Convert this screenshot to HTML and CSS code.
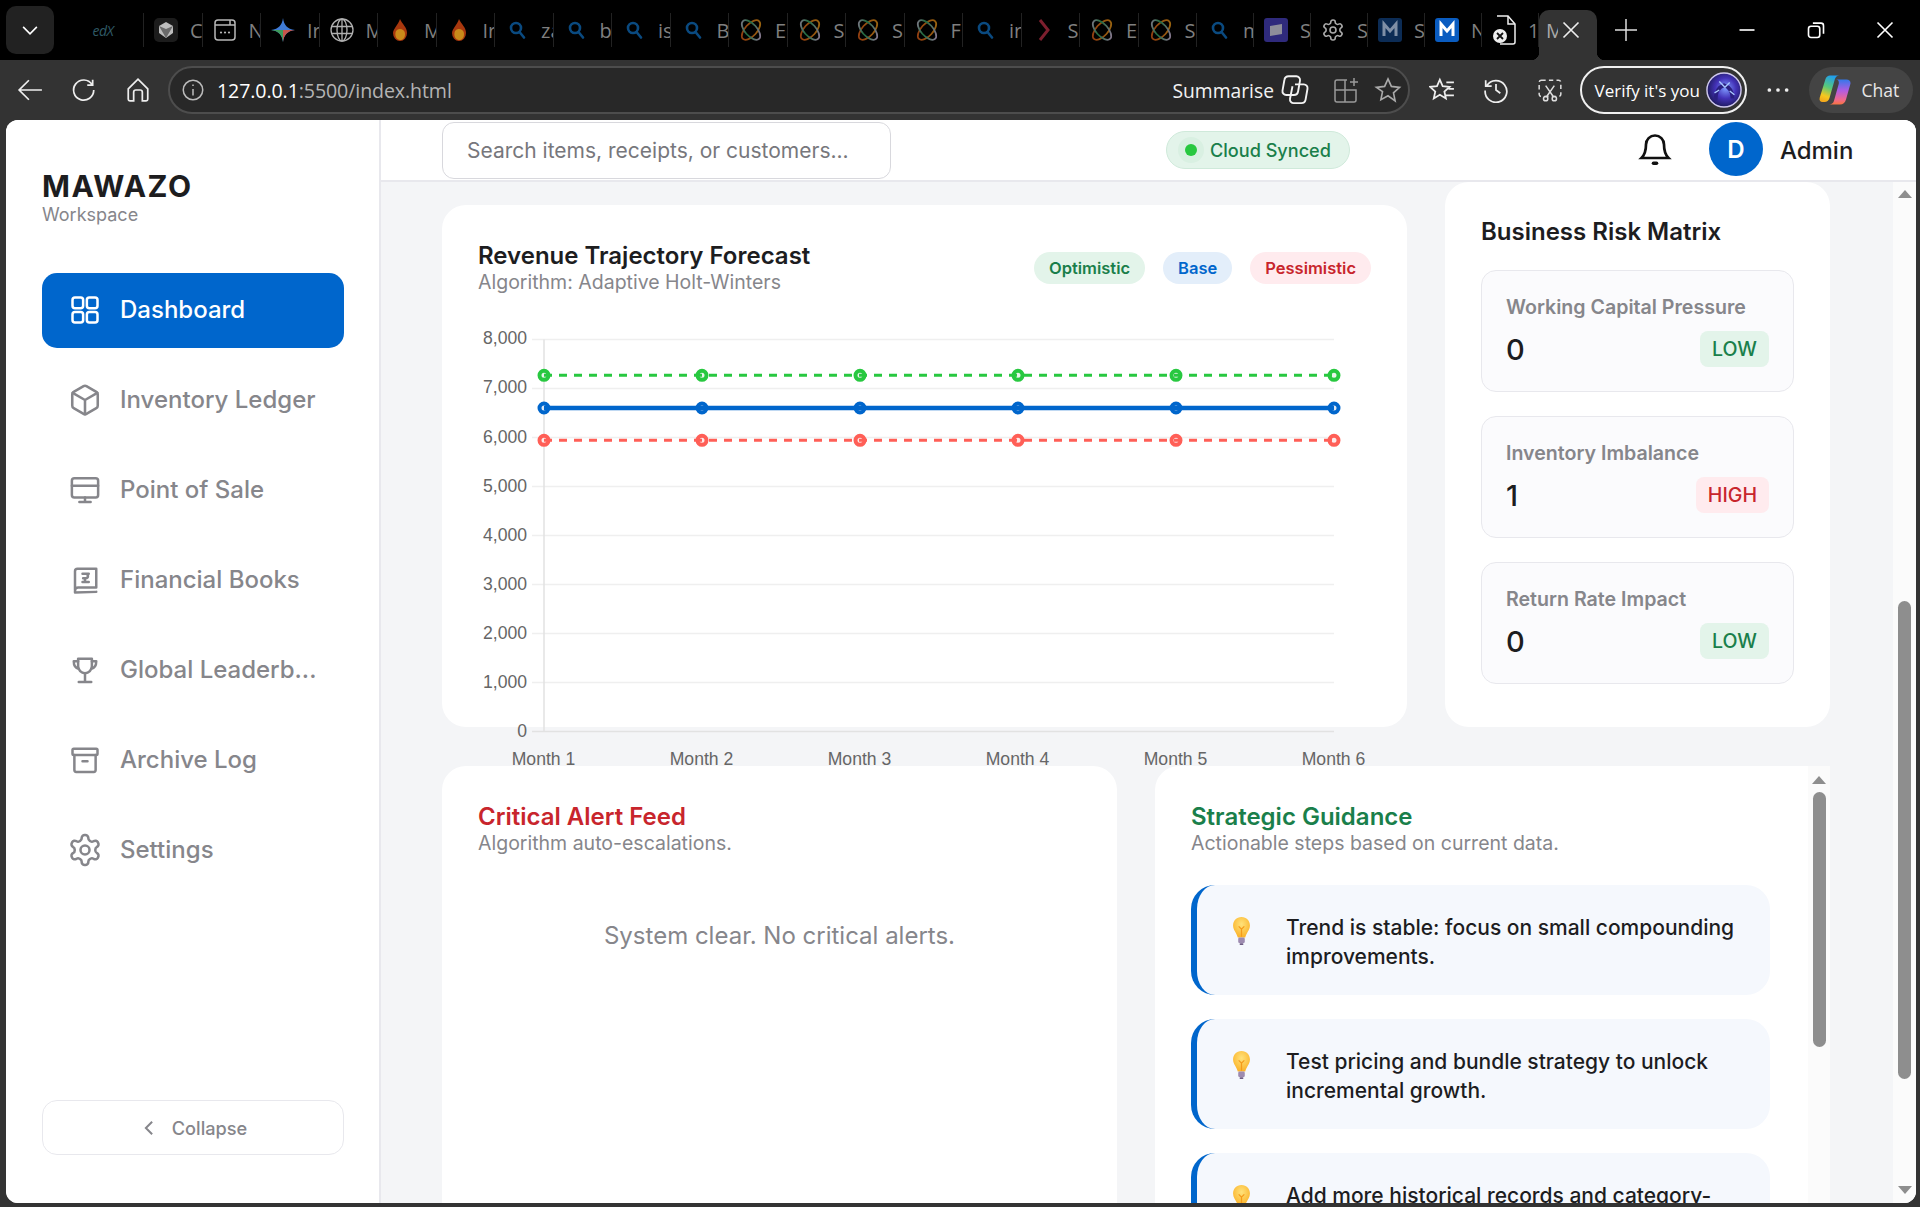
FILE: index.html
```html
<!DOCTYPE html>
<html lang="en">
<head>
<meta charset="utf-8">
<title>MAWAZO Workspace</title>
<link rel="stylesheet" href="styles.css">
</head>
<body>
<svg class="defs" width="0" height="0" aria-hidden="true">
  <defs>
    <linearGradient id="knot-a" gradientUnits="userSpaceOnUse" x1="2" y1="2" x2="18" y2="24"><stop offset="0" stop-color="#96799a"/><stop offset=".4" stop-color="#1e6a3c"/><stop offset="1" stop-color="#96799a"/></linearGradient>
    <linearGradient id="knot-b" gradientUnits="userSpaceOnUse" x1="24" y1="2" x2="2" y2="24"><stop offset="0" stop-color="#9a6c10"/><stop offset="1" stop-color="#8f3410"/></linearGradient>
  </defs>
  <symbol id="i-search" viewBox="0 0 24 24"><circle cx="11" cy="10" r="5" fill="none" stroke="#0a4a80" stroke-width="2.600"/><path d="M14.500 14l4.500 5.500" stroke="#0a4a80" stroke-width="2.600" stroke-linecap="round"/></symbol>
  <symbol id="i-knot" viewBox="0 0 24 24"><ellipse cx="12" cy="12" rx="6" ry="12" transform="rotate(42 12 12)" fill="none" stroke="url(#knot-b)" stroke-width="1.800"/><ellipse cx="12" cy="12" rx="6" ry="12" transform="rotate(-42 12 12)" fill="none" stroke="url(#knot-a)" stroke-width="1.800"/></symbol>
  <symbol id="i-flame" viewBox="0 0 24 24"><path d="M12 1c2 5 7 8 7 14a7 8 0 0 1-14 0c0-4 5-8 7-14z" fill="#a8380e"/><path d="M8 13a5 5 0 0 1 9 3c0 4-2 6-5 6s-6-4-4-9z" fill="#c98a1a"/></symbol>
  <symbol id="i-gear" viewBox="0 0 24 24"><path d="M12.220 2h-.44a2 2 0 0 0-2 2v.18a2 2 0 0 1-1 1.730l-.43.25a2 2 0 0 1-2 0l-.15-.08a2 2 0 0 0-2.730.73l-.22.38a2 2 0 0 0 .73 2.730l.15.1a2 2 0 0 1 1 1.720v.51a2 2 0 0 1-1 1.740l-.15.09a2 2 0 0 0-.73 2.730l.22.38a2 2 0 0 0 2.730.73l.15-.08a2 2 0 0 1 2 0l.43.25a2 2 0 0 1 1 1.730V20a2 2 0 0 0 2 2h.44a2 2 0 0 0 2-2v-.18a2 2 0 0 1 1-1.730l.43-.25a2 2 0 0 1 2 0l.15.08a2 2 0 0 0 2.730-.73l.22-.39a2 2 0 0 0-.73-2.730l-.15-.08a2 2 0 0 1-1-1.740v-.5a2 2 0 0 1 1-1.740l.15-.09a2 2 0 0 0 .73-2.730l-.22-.38a2 2 0 0 0-2.730-.73l-.15.08a2 2 0 0 1-2 0l-.43-.25a2 2 0 0 1-1-1.730V4a2 2 0 0 0-2-2z"/><circle cx="12" cy="12" r="3"/></symbol>
  <symbol id="i-bulb" viewBox="0 0 20 32"><defs><radialGradient id="bulb-fill" cx="50%" cy="35%" r="65%"><stop offset="0" stop-color="#ffe27a"/><stop offset="1" stop-color="#fbb228"/></radialGradient></defs><path d="M10 1C4.500 1 1 5 1 10c0 5 4 8 5 13h8c1-5 5-8 5-13 0-5-3.500-9-9-9z" fill="url(#bulb-fill)"/><path d="M7 11l3 3 3-3M10 14v8" fill="none" stroke="#f59a1a" stroke-width="1.300"/><rect x="6.500" y="23" width="7" height="6" rx="1.500" fill="#9d8bb0"/><rect x="8" y="29" width="4" height="2" rx="1" fill="#6f5e85"/></symbol>
</svg>

<header class="tabstrip">
  <button class="tab-menu" type="button" aria-label="Tab actions"><svg class="ic-16" viewBox="0 0 16 16"><path d="M2.500 5.500L8 11l5.500-5.500" fill="none" stroke="#fff" stroke-width="1.300"/></svg></button>
  <div class="tabs">
    <div class="tab tab-first"><span class="edx">edX</span></div>
    <div class="tab"><svg class="fav" viewBox="0 0 24 24"><rect width="24" height="24" rx="5" fill="#1c1c1c"/><path d="M12 4l7 4v7l-7 5-7-5V8z" fill="#bdbdbd"/><path d="M5 8l7 3 7-3-7 12z" fill="#6a6a6a"/></svg><span>C</span></div>
    <div class="tab"><svg class="fav" viewBox="0 0 24 24" fill="none" stroke="#b8b8b8" stroke-width="1.500"><rect x="2" y="2" width="20" height="20" rx="3"/><path d="M2 7h20M17 2v5"/><path d="M8 14.500h.01M12 14.500h.01M16 14.500h.01" stroke-width="2.200" stroke-linecap="round"/></svg><span>N</span></div>
    <div class="tab"><svg class="fav" viewBox="0 0 24 24"><path d="M12 0c1 7 4 11 12 12-8 1-11 5-12 12-1-7-4-11-12-12 8-1 11-5 12-12z" fill="#3f7bd6"/><path d="M12 12h12c-8 1-11 5-12 12z" fill="#c8554a"/><path d="M12 12v12c-1-7-4-11-12-12z" fill="#3d9a5a"/></svg><span>Ir</span></div>
    <div class="tab"><svg class="fav" viewBox="0 0 24 24" fill="none" stroke="#b0b0b0" stroke-width="1.300"><circle cx="12" cy="12" r="11"/><ellipse cx="12" cy="12" rx="5" ry="11"/><path d="M1.500 8.500h21M1.500 15.500h21M12 1v22"/></svg><span>M</span></div>
    <div class="tab"><svg class="fav"><use href="#i-flame"/></svg><span>M</span></div>
    <div class="tab"><svg class="fav"><use href="#i-flame"/></svg><span>Ir</span></div>
    <div class="tab"><svg class="fav"><use href="#i-search"/></svg><span>za</span></div>
    <div class="tab"><svg class="fav"><use href="#i-search"/></svg><span>b</span></div>
    <div class="tab"><svg class="fav"><use href="#i-search"/></svg><span>is</span></div>
    <div class="tab"><svg class="fav"><use href="#i-search"/></svg><span>B</span></div>
    <div class="tab"><svg class="fav"><use href="#i-knot"/></svg><span>E</span></div>
    <div class="tab"><svg class="fav"><use href="#i-knot"/></svg><span>S</span></div>
    <div class="tab"><svg class="fav"><use href="#i-knot"/></svg><span>S</span></div>
    <div class="tab"><svg class="fav"><use href="#i-knot"/></svg><span>F</span></div>
    <div class="tab"><svg class="fav"><use href="#i-search"/></svg><span>ir</span></div>
    <div class="tab"><svg class="fav" viewBox="0 0 24 24"><path d="M8 2l8 10-8 10" fill="none" stroke="#7d1f2e" stroke-width="3"/></svg><span>S</span></div>
    <div class="tab"><svg class="fav"><use href="#i-knot"/></svg><span>E</span></div>
    <div class="tab"><svg class="fav"><use href="#i-knot"/></svg><span>S</span></div>
    <div class="tab tab-narrow"><svg class="fav"><use href="#i-search"/></svg><span>m</span></div>
    <div class="tab tab-narrow"><svg class="fav" viewBox="0 0 24 24"><rect width="24" height="24" rx="3" fill="#2f2a7c"/><path d="M6 8l12-2v10l-12 2z" fill="#8e8e9a"/></svg><span>S</span></div>
    <div class="tab tab-narrow"><svg class="fav gear-fav"><use href="#i-gear"/></svg><span>S</span></div>
    <div class="tab tab-narrow"><svg class="fav" viewBox="0 0 24 24"><rect width="24" height="24" rx="3" fill="#0c2c55"/><path d="M6 18V6l6 7 6-7v12" fill="none" stroke="#7f8fa6" stroke-width="3"/></svg><span>S</span></div>
    <div class="tab tab-narrow"><svg class="fav" viewBox="0 0 24 24"><rect width="24" height="24" rx="3" fill="#0a5cc0"/><path d="M6 18V6l6 7 6-7v12" fill="none" stroke="#fff" stroke-width="3"/></svg><span>N</span></div>
    <div class="tab tab-narrow"><svg class="fav fav-doc" viewBox="0 0 24 30" fill="none" stroke="#eee" stroke-width="1.500"><path d="M5 1h11l7 8v18a2 2 0 0 1-2 2H8"/><path d="M16 1v8h7"/><circle cx="8" cy="21" r="7" fill="#eee" stroke="none"/><path d="M5 18l6 6M11 18l-6 6" stroke="#111" stroke-width="1.800"/></svg><span>1</span></div>
  </div>
  <div class="tab-active"><span class="tab-active-title">M</span><svg class="ic-16" viewBox="0 0 16 16"><path d="M2 2l12 12M14 2L2 14" stroke="#eee" stroke-width="1.300"/></svg></div>
  <svg class="new-tab" viewBox="0 0 24 24"><path d="M12 1v22M1 12h22" stroke="#ddd" stroke-width="1.500"/></svg>
  <div class="winctl">
    <svg class="ic-16" viewBox="0 0 16 16"><path d="M2 8h12" stroke="#fff" stroke-width="1.300"/></svg>
    <svg class="ic-16" viewBox="0 0 16 16" fill="none" stroke="#fff" stroke-width="1.300"><rect x="2" y="5" width="9" height="9" rx="2"/><path d="M5.500 2.500H12a2 2 0 0 1 2 2V11"/></svg>
    <svg class="ic-16" viewBox="0 0 16 16"><path d="M2 2l12 12M14 2L2 14" stroke="#fff" stroke-width="1.300"/></svg>
  </div>
</header>

<nav class="toolbar">
  <span class="tool"><svg class="ic-26" viewBox="0 0 24 24" fill="none" stroke="#eee" stroke-width="1.600"><path d="M23 12H2M11 3l-9 9 9 9"/></svg></span>
  <span class="tool"><svg class="ic-26" viewBox="0 0 24 24" fill="none" stroke="#eee" stroke-width="1.600"><path d="M19.500 7A9.300 9.300 0 1 0 21 12M20 2.500V7.500h-5"/></svg></span>
  <span class="tool"><svg class="ic-26" viewBox="0 0 24 24" fill="none" stroke="#eee" stroke-width="1.600"><path d="M3 11l9-9 9 9v9.500a1.500 1.500 0 0 1-1.500 1.500H16v-8a2 2 0 0 0-2-2h-4a2 2 0 0 0-2 2v8H4.500A1.500 1.500 0 0 1 3 20.500z"/></svg></span>
  <div class="addressbar">
    <svg class="ic-24" viewBox="0 0 24 24" fill="none" stroke="#bbb" stroke-width="1.400"><circle cx="12" cy="12" r="9"/><path d="M12 11v6M12 7v1.400"/></svg>
    <span class="url"><b>127.0.0.1</b>:5500/index.html</span>
    <span class="summarise">Summarise</span>
    <svg class="ic-30" viewBox="3 2 24 24" fill="none" stroke="#f2f2f2" stroke-width="1.500"><path d="M10 3h6a3 3 0 0 1 3 3.500L17.500 15a3.500 3.500 0 0 1-3.500 3H8a3 3 0 0 1-3-3.500L6.500 6A3.500 3.500 0 0 1 10 3z"/><path d="M15 9.500h7a3 3 0 0 1 3 3.500l-1.500 8.500a3.500 3.500 0 0 1-3.500 3h-6a3 3 0 0 1-3-3.500L13 11"/></svg>
    <svg class="ic-28 add-split" viewBox="0 0 28 28" fill="none" stroke="#999" stroke-width="1.500"><path d="M15 4H5a2 2 0 0 0-2 2v18a2 2 0 0 0 2 2h17a2 2 0 0 0 2-2V14H3M13 4v22M22 2v8M18 6h8"/></svg>
    <svg class="ic-28 star" viewBox="0 0 24 24" fill="none" stroke="#aaa" stroke-width="1.400"><path d="M12 2.500l2.900 6.400 7 .8-5.200 4.700 1.400 6.900L12 17l-6.100 3.300 1.400-6.900L2.100 9.700l7-.8z"/></svg>
  </div>
  <span class="tool tool-first"><svg class="ic-26" viewBox="0 0 24 24" fill="none" stroke="#eee" stroke-width="1.600"><path d="M10 2.500l2.600 6 6.400.6-4.800 4.300 1.400 6.400L10 16.500l-5.600 3.300 1.400-6.400L1 9.100l6.400-.6zM16 5h7M18 11h5M15 17h8"/></svg></span>
  <span class="tool"><svg class="ic-26" viewBox="0 0 24 24" fill="none" stroke="#eee" stroke-width="1.600"><path d="M3.500 8A10 10 0 1 1 2 12.500M2.500 3v5.500H8M12 6.500V12l4 3"/></svg></span>
  <span class="tool"><svg class="ic-26" viewBox="0 0 24 24" fill="none" stroke="#ddd" stroke-width="1.400"><rect x="2" y="3" width="20" height="15" rx="2" stroke-dasharray="4 3"/><path d="M8 8l7 10M16 8L9 18"/><circle cx="8" cy="20" r="2"/><circle cx="16" cy="20" r="2"/></svg></span>
  <div class="verify"><span>Verify it's you</span><svg class="avatar-img" viewBox="0 0 38 38"><defs><radialGradient id="av" cx="55%" cy="45%" r="60%"><stop offset="0" stop-color="#7f9cff"/><stop offset=".5" stop-color="#4332b8"/><stop offset="1" stop-color="#181650"/></radialGradient></defs><circle cx="19" cy="19" r="18" fill="url(#av)" stroke="#cfc8ee" stroke-width="1.500"/><path d="M10 30c0-9 3-14 9-16 6 2 9 7 9 14" fill="none" stroke="#2a1f80" stroke-width="4"/><path d="M14 10l6 6 5-5M9 22l5-3M25 20l5 4" fill="none" stroke="#a9c8ff" stroke-width="1.500"/></svg></div>
  <span class="tool tool-dots"><svg class="ic-26" viewBox="0 0 24 24" fill="#eee"><circle cx="4" cy="12" r="1.700"/><circle cx="12" cy="12" r="1.700"/><circle cx="20" cy="12" r="1.700"/></svg></span>
  <div class="chat"><svg class="copilot" viewBox="0 0 32 32"><defs><linearGradient id="cp1" x1=".6" y1="0" x2=".3" y2="1"><stop offset="0" stop-color="#1f9df0"/><stop offset=".45" stop-color="#58c97a"/><stop offset=".8" stop-color="#f7c71e"/><stop offset="1" stop-color="#f4a81c"/></linearGradient><linearGradient id="cp2" x1=".5" y1="0" x2=".5" y2="1"><stop offset="0" stop-color="#3478ea"/><stop offset=".45" stop-color="#b25ce2"/><stop offset=".8" stop-color="#f0688f"/><stop offset="1" stop-color="#f8743f"/></linearGradient></defs><path d="M11 1.500h9.500c-2.500 0-4 1.500-4.600 3.600L10.500 24c-.8 2.600-2.500 4-5 4H3.500C1.200 28 0 26 .7 23.700L6.500 5C7.200 2.800 9 1.500 11 1.500z" fill="url(#cp1)"/><path d="M17 5.500h10.500c3 0 4.600 2 3.800 4.800L27 25.500c-1 3.300-3 5-6 5H10c2.500 0 4.300-1.300 5-3.800L19.700 10c.6-2.600-.5-4.500-2.700-4.500z" fill="url(#cp2)"/></svg><span>Chat</span></div>
</nav>

<div class="viewport">
  <aside class="sidebar">
    <div class="brand">
      <div class="brand-name">MAWAZO</div>
      <div class="brand-sub">Workspace</div>
    </div>
    <ul class="nav">
      <li class="nav-item is-active"><svg class="nav-ic" viewBox="0 0 24 24"><rect x="2" y="2" width="8.500" height="8.500" rx="2"/><rect x="13.500" y="2" width="8.500" height="8.500" rx="2"/><rect x="2" y="13.500" width="8.500" height="8.500" rx="2"/><rect x="13.500" y="13.500" width="8.500" height="8.500" rx="2"/></svg><span>Dashboard</span></li>
      <li class="nav-item"><svg class="nav-ic nav-wide" viewBox="0 0 24 24"><path d="M21 8a2 2 0 0 0-1-1.730l-7-4a2 2 0 0 0-2 0l-7 4A2 2 0 0 0 3 8v8a2 2 0 0 0 1 1.730l7 4a2 2 0 0 0 2 0l7-4A2 2 0 0 0 21 16z"/><path d="M3.300 7L12 12l8.700-5M12 22V12"/></svg><span>Inventory Ledger</span></li>
      <li class="nav-item"><svg class="nav-ic" viewBox="0 0 24 24"><rect x="1.500" y="2.500" width="21" height="15.500" rx="2"/><path d="M1.500 8.500h21M12 18v3.500M7.500 21.500h9"/></svg><span>Point of Sale</span></li>
      <li class="nav-item"><svg class="nav-ic" viewBox="0 0 24 24"><path d="M4 20V5a2 2 0 0 1 2-2h15v15H6.500A2.500 2.500 0 0 0 4 20.500V22l17-.5"/><path d="M10 7h5M12.500 7c2.500 0 2.500 3.500 0 3.500h-2M10 13.500h5M12 10.500v3"/></svg><span>Financial Books</span></li>
      <li class="nav-item"><svg class="nav-ic" viewBox="0 0 24 24"><path d="M6.500 3h11v6a5.500 5.500 0 0 1-11 0z"/><path d="M6.500 5H3c0 3.500 1.500 5.500 4 6M17.500 5H21c0 3.500-1.500 5.500-4 6M12 14.500V21M7 21.500h10"/></svg><span>Global Leaderb...</span></li>
      <li class="nav-item"><svg class="nav-ic" viewBox="0 0 24 24"><rect x="2" y="3" width="20" height="5" rx="1"/><path d="M3.500 8v12a1.500 1.500 0 0 0 1.500 1.500h14a1.500 1.500 0 0 0 1.500-1.500V8M10 13h4"/></svg><span>Archive Log</span></li>
      <li class="nav-item"><svg class="nav-ic nav-gear"><use href="#i-gear"/></svg><span>Settings</span></li>
    </ul>
    <button class="collapse" type="button"><svg class="collapse-ic" viewBox="0 0 16 16"><path d="M10.500 3L5.500 8l5 5" fill="none" stroke="#86868b" stroke-width="1.600"/></svg><span>Collapse</span></button>
  </aside>

  <div class="page">
    <div class="topbar">
      <div class="search">Search items, receipts, or customers...</div>
      <div class="sync"><i class="sync-dot"></i><span>Cloud Synced</span></div>
      <svg class="bell" viewBox="0 0 24 24" fill="none" stroke="#111" stroke-width="1.800"><path d="M6 9a6 6 0 0 1 12 0c0 6 2 8 3 9H3c1-1 3-3 3-9z"/><path d="M11 21.500h2" stroke-linecap="round" stroke-width="2.400"/></svg>
      <div class="avatar">D</div>
      <div class="admin">Admin</div>
    </div>

    <div class="body-wrap">
      <main class="content">
        <div class="row-top">
          <section class="card card-forecast">
            <div class="card-head">
              <div>
                <h2 class="card-title">Revenue Trajectory Forecast</h2>
                <p class="card-sub">Algorithm: Adaptive Holt-Winters</p>
              </div>
              <div class="legend">
                <span class="pill pill-green">Optimistic</span>
                <span class="pill pill-blue">Base</span>
                <span class="pill pill-red">Pessimistic</span>
              </div>
            </div>
            <svg class="chart" viewBox="0 0 890 445" width="890" height="445">
              <g class="grid">
                <path d="M54 13.500H856M54 62.500H856M54 111.500H856M54 160.500H856M54 209.500H856M54 258.500H856M54 307.500H856M54 356.500H856"/>
                <path class="axis" d="M66 13.500V406M54 405.500H856"/>
              </g>
              <g class="ylabels">
                <text x="49" y="18">8,000</text><text x="49" y="67">7,000</text><text x="49" y="117">6,000</text><text x="49" y="166">5,000</text><text x="49" y="215">4,000</text><text x="49" y="264">3,000</text><text x="49" y="313">2,000</text><text x="49" y="362">1,000</text><text x="49" y="411">0</text>
              </g>
              <g class="xlabels">
                <text x="65.500" y="439">Month 1</text><text x="223.500" y="439">Month 2</text><text x="381.500" y="439">Month 3</text><text x="539.500" y="439">Month 4</text><text x="697.500" y="439">Month 5</text><text x="855.500" y="439">Month 6</text>
              </g>
              <g class="pts-green"><circle cx="66" cy="49.300" r="4.500"/><circle cx="224" cy="49.300" r="4.500"/><circle cx="382" cy="49.300" r="4.500"/><circle cx="540" cy="49.300" r="4.500"/><circle cx="698" cy="49.300" r="4.500"/><circle cx="856" cy="49.300" r="4.500"/></g>
              <g class="pts-red"><circle cx="66" cy="114.300" r="4.500"/><circle cx="224" cy="114.300" r="4.500"/><circle cx="382" cy="114.300" r="4.500"/><circle cx="540" cy="114.300" r="4.500"/><circle cx="698" cy="114.300" r="4.500"/><circle cx="856" cy="114.300" r="4.500"/></g>
              <g class="pts-blue"><circle cx="66" cy="82" r="4.500"/><circle cx="224" cy="82" r="4.500"/><circle cx="382" cy="82" r="4.500"/><circle cx="540" cy="82" r="4.500"/><circle cx="698" cy="82" r="4.500"/><circle cx="856" cy="82" r="4.500"/></g>
              <path class="line-green" d="M66 49.300H856"/>
              <path class="line-red" d="M66 114.300H856"/>
              <path class="line-blue" d="M66 82H856"/>
            </svg>
          </section>

          <section class="card card-risk">
            <h2 class="card-title">Business Risk Matrix</h2>
            <div class="risk-list">
              <div class="risk"><div class="risk-label">Working Capital Pressure</div><div class="risk-row"><span class="risk-val">0</span><span class="tag tag-low">LOW</span></div></div>
              <div class="risk"><div class="risk-label">Inventory Imbalance</div><div class="risk-row"><span class="risk-val">1</span><span class="tag tag-high">HIGH</span></div></div>
              <div class="risk"><div class="risk-label">Return Rate Impact</div><div class="risk-row"><span class="risk-val">0</span><span class="tag tag-low">LOW</span></div></div>
            </div>
          </section>
        </div>

        <div class="row-bottom">
          <section class="card card-alerts">
            <h2 class="card-title title-red">Critical Alert Feed</h2>
            <p class="card-sub">Algorithm auto-escalations.</p>
            <p class="empty">System clear. No critical alerts.</p>
          </section>
          <section class="card card-guidance">
            <div class="guidance-body">
              <h2 class="card-title title-green">Strategic Guidance</h2>
              <p class="card-sub">Actionable steps based on current data.</p>
              <div class="advice"><svg class="bulb"><use href="#i-bulb"/></svg><p>Trend is stable: focus on small compounding improvements.</p></div>
              <div class="advice"><svg class="bulb"><use href="#i-bulb"/></svg><p>Test pricing and bundle strategy to unlock incremental growth.</p></div>
              <div class="advice"><svg class="bulb"><use href="#i-bulb"/></svg><p>Add more historical records and category-level tagging for sharper forecasts.</p></div>
            </div>
            <div class="scrollbar scrollbar-inner"><i class="arrow-up"></i><i class="thumb"></i><i class="arrow-down"></i></div>
          </section>
        </div>
      </main>
      <div class="scrollbar scrollbar-page"><i class="arrow-up"></i><i class="thumb"></i><i class="arrow-down"></i></div>
    </div>
  </div>
</div>
</body>
</html>
```

FILE: styles.css
```css
* { box-sizing: border-box; }
html, body { margin: 0; height: 100%; }
body {
  width: 1920px; height: 1207px; overflow: hidden;
  background: #333; color: #1d1d1f;
  font-family: Inter, "Noto Sans", sans-serif;
  display: flex; flex-direction: column;
}
.defs { position: absolute; }
h2, p, ul { margin: 0; padding: 0; }
i { display: block; }

/* browser tab strip */
.tabstrip { height: 60px; flex: none; background: #000; display: flex; align-items: center; font-family: "Open Sans", sans-serif; position: relative; }
.tab-menu { width: 48px; height: 48px; margin-left: 6px; border: 0; border-radius: 10px; background: #222; display: flex; align-items: center; justify-content: center; padding: 0; }
.ic-16 { width: 20px; height: 20px; flex: none; }
.tabs { display: flex; margin-left: 31.500px; flex: none; }
.tab { width: 58.500px; height: 34px; flex: none; display: flex; align-items: center; overflow: hidden; padding-left: 10px; gap: 12px; border-right: 1px solid #222; color: #7f7f7f; font-size: 20px; white-space: nowrap; }
.tab-narrow { width: 57px; }
.tab-first { padding-left: 7px; }
.edx { font-size: 14px; font-style: italic; color: #2f5a66; letter-spacing: -.5px; }
.fav { width: 24px; height: 24px; flex: none; }
.fav-doc { height: 30px; }
.gear-fav { fill: none; stroke: #aaa; stroke-width: 1.600; }
.tab-active { width: 58px; height: 50px; margin-top: 10px; flex: none; background: #333; border-radius: 10px 10px 0 0; display: flex; align-items: center; padding: 0 0 10px 7px; gap: 3px; color: #aaa; font-size: 20px; position: relative; }
.tab-active::before, .tab-active::after { content: ""; position: absolute; bottom: 0; width: 8px; height: 8px; background: radial-gradient(circle at 0 0, #000 8px, #333 8.500px); }
.tab-active::before { left: -8px; }
.tab-active::after { right: -8px; background: radial-gradient(circle at 100% 0, #000 8px, #333 8.500px); }
.tab-active-title { width: 12px; overflow: hidden; }
.new-tab { width: 24px; height: 24px; margin-left: 16.500px; flex: none; }
.winctl { display: flex; margin-left: auto; margin-right: 25px; gap: 49px; }

/* browser toolbar */
.toolbar { height: 60px; flex: none; background: #333; display: flex; align-items: center; padding-left: 8px; font-family: "Open Sans", sans-serif; color: #fff; overflow: hidden; }
.tool { width: 44px; height: 44px; flex: none; display: flex; align-items: center; justify-content: center; margin-right: 10px; }
.ic-26 { width: 26px; height: 26px; flex: none; }
.ic-24 { width: 26px; height: 26px; flex: none; }
.ic-28 { width: 28px; height: 28px; flex: none; }
.ic-30 { width: 30px; height: 30px; flex: none; }
.addressbar { width: 1242px; height: 48px; flex: none; margin-left: -2px; margin-right: 10px; background: #282828; border: 2px solid #4d4d4d; border-radius: 24px; display: flex; align-items: center; padding-left: 10px; }
.url { margin-left: 11px; font-size: 19.600px; color: #b4b4b4; letter-spacing: -.1px; }
.url b { color: #fff; font-weight: 400; }
.summarise { margin-left: auto; margin-right: 6px; font-size: 19.300px; color: #f2f2f2; }
.add-split { margin-left: 22px; }
.star { margin: 0 6px 0 14px; }
.tool-first { margin-left: 0; }
.verify { width: 167px; height: 48px; flex: none; margin-left: -2.500px; border: 2px solid #f0f0f0; border-radius: 24px; display: flex; align-items: center; justify-content: space-between; padding: 0 3px 0 13px; font-size: 17px; white-space: nowrap; }
.avatar-img { width: 36px; height: 36px; flex: none; }
.tool-dots { margin-left: 9px; margin-right: 9px; }
.chat { width: 104px; height: 46px; flex: none; background: #444; border-radius: 23px; display: flex; align-items: center; padding-left: 10px; gap: 11px; font-size: 17.500px; color: #e8e8e8; }
.copilot { width: 32px; height: 32px; flex: none; }

/* app shell */
.viewport { flex: 1; min-height: 0; margin: 0 4px 4px 6px; background: #fff; border-radius: 12px; overflow: hidden; display: flex; }
.sidebar { width: 375px; flex: none; background: #fff; border-right: 2px solid #e8e8ed; padding: 48px 35px 48px 36px; display: flex; flex-direction: column; }
.brand-name { font-size: 30px; font-weight: 700; letter-spacing: 1.500px; line-height: 36px; color: #1d1d1f; }
.brand-sub { font-size: 18px; line-height: 20px; color: #86868b; margin-top: 1px; }
.nav { list-style: none; margin-top: 48px; display: flex; flex-direction: column; gap: 15px; }
.nav-item { height: 75px; border-radius: 15px; display: flex; align-items: center; padding: 0 0 2px 28px; gap: 20px; font-size: 24px; font-weight: 500; color: #86868b; }
.nav-ic { width: 30px; height: 30px; flex: none; fill: none; stroke: currentColor; stroke-width: 2; stroke-linecap: round; stroke-linejoin: round; }
.nav-wide { width: 34px; height: 34px; margin: 0 -2px; stroke-width: 1.800; }
.nav-gear { width: 36px; height: 36px; margin: 0 -3px; stroke-width: 1.700; }
.nav-item.is-active { background: #0066cc; color: #fff; }
.collapse { margin-top: auto; height: 55px; border: 1px solid #e8e8ed; border-radius: 15px; background: #fff; display: flex; align-items: center; justify-content: center; gap: 13px; padding-left: 6px; font: 500 18.200px Inter, sans-serif; color: #86868b; }
.collapse-ic { width: 20px; height: 20px; }

.page { flex: 1; min-width: 0; display: flex; flex-direction: column; background: #f4f5f7; }
.topbar { height: 62px; flex: none; background: #fff; border-bottom: 2px solid #e8e8ed; display: flex; align-items: center; padding-left: 61px; position: relative; z-index: 2; }
.search { width: 449px; height: 57px; border: 1px solid #d8d8dd; border-radius: 12px; padding-left: 24px; display: flex; align-items: center; font-size: 21px; color: #77777c; }
.sync { height: 38px; margin-left: 275px; padding: 0 18px 0 18px; background: #e3f4ea; border: 1px solid #cfe9da; border-radius: 19px; display: flex; align-items: center; gap: 13px; font-size: 18.100px; font-weight: 500; color: #1a7f4b; }
.sync-dot { width: 12px; height: 12px; border-radius: 50%; background: #28c840; box-shadow: 0 0 0 7px #d9f0e2; }
.bell { width: 36px; height: 36px; margin-left: 287px; margin-top: -2px; flex: none; }
.avatar { width: 54px; height: 54px; margin-left: 36px; border-radius: 50%; background: #0066cc; color: #fff; display: flex; align-items: center; justify-content: center; font-size: 24px; font-weight: 600; margin-top: -2px; flex: none; }
.admin { margin-left: 17px; font-size: 24px; font-weight: 500; color: #1d1d1f; }

.body-wrap { flex: 1; min-height: 0; display: flex; }
.content { flex: 1; min-width: 0; overflow: hidden; padding-left: 61px; }
.scrollbar { flex: none; background: #fbfbfb; display: flex; flex-direction: column; align-items: center; position: relative; }
.scrollbar-page { width: 23px; }
.scrollbar-inner { width: 22px; }
.arrow-up { width: 0; height: 0; border: 7px solid transparent; border-top: 0; border-bottom: 8px solid #8e8e8e; }
.arrow-down { width: 0; height: 0; border: 7px solid transparent; border-bottom: 0; border-top: 8px solid #8e8e8e; position: absolute; bottom: 9px; }
.thumb { width: 13px; background: #8e8e8e; border-radius: 7px; }
.scrollbar-page .arrow-up { margin-top: 8px; }
.scrollbar-page .thumb { height: 478px; margin-top: 403px; }
.scrollbar-inner .arrow-up { margin-top: 10px; }
.scrollbar-inner .thumb { height: 255px; margin-top: 8px; }

.row-top { display: grid; grid-template-columns: 965px 385px; column-gap: 38px; align-items: end; }
.row-bottom { display: grid; grid-template-columns: 675px 675px; column-gap: 38px; margin-top: 39px; position: relative; }
.card { background: #fff; border-radius: 24px; }
.card-forecast { height: 522px; padding: 35px 36px 0; }
.card-head { display: flex; justify-content: space-between; align-items: flex-start; }
.card-title { font-size: 24px; font-weight: 600; line-height: 30px; color: #1d1d1f; padding-top: 1px; margin-bottom: -1px; }
.card-sub { font-size: 19.500px; line-height: 24px; color: #86868b; }
.legend { display: flex; gap: 18px; margin-top: 12px; }
.pill { height: 32px; padding: 0 15px; border-radius: 16px; display: flex; align-items: center; font-size: 16.500px; font-weight: 600; }
.pill-green { background: #e3f4ea; color: #1a7f4b; }
.pill-blue { background: #e3eefa; color: #0066cc; }
.pill-red { background: #ffebee; color: #c8252c; }
.chart { display: block; margin-top: 32px; overflow: visible; font-family: "Liberation Sans", Arial, sans-serif; font-size: 17.600px; fill: #666; }
.grid path { fill: none; stroke: #efefef; stroke-width: 1.500; }
.grid .axis { stroke: #e2e2e2; }
.ylabels text { text-anchor: end; }
.xlabels text { text-anchor: middle; }
.line-blue { fill: none; stroke: #0066cc; stroke-width: 4.500; }
.line-green { fill: none; stroke: #28c840; stroke-width: 3; stroke-dasharray: 8 7; }
.line-red { fill: none; stroke: #ff5f57; stroke-width: 3; stroke-dasharray: 8 7; }
.pts-blue circle { fill: #dde8f5; stroke: #0066cc; stroke-width: 4; }
.pts-green circle { fill: #e8f5ea; stroke: #28c840; stroke-width: 4; }
.pts-red circle { fill: #fdeaea; stroke: #ff5f57; stroke-width: 4; }

.card-risk { height: 545px; padding: 34px 36px 0 36px; }
.risk-list { display: flex; flex-direction: column; gap: 24px; margin-top: 24px; }
.risk { height: 122px; background: #fbfbfd; border: 1px solid #e8e8ed; border-radius: 15px; padding: 24px 24px 0 24px; }
.risk-label { font-size: 19.600px; font-weight: 600; line-height: 24px; color: #86868b; }
.risk-row { display: flex; justify-content: space-between; align-items: center; margin-top: 12px; }
.risk-val { font-size: 29px; font-weight: 500; color: #1d1d1f; }
.tag { height: 36px; padding: 0 12px; border-radius: 8px; display: flex; align-items: center; font-size: 19.600px; font-weight: 500; }
.tag-low { background: #e3f4ea; color: #1a7f4b; }
.tag-high { background: #ffebee; color: #c8252c; }

.card-alerts, .card-guidance { height: 560px; border-radius: 24px 24px 0 0; }
.card-alerts { padding: 35px 36px; }
.title-red { color: #c8252c; }
.title-green { color: #1a7f4b; }
.empty { margin-top: 66px; text-align: center; font-size: 24px; line-height: 30px; color: #86868b; }
.card-guidance { display: flex; overflow: hidden; border-radius: 24px 0 0 0; }
.guidance-body { flex: 1; min-width: 0; padding: 35px 38px 0 36px; }
.advice { height: 110px; margin-bottom: 24px; background: #f5f8fd; border-left: 6px solid #0066cc; border-radius: 24px; display: flex; align-items: flex-start; padding: 28px 24px 0 35px; gap: 35px; }
.card-sub + .advice { margin-top: 30px; }
.advice p { font-size: 21px; font-weight: 500; line-height: 29.400px; color: #1d1d1f; }
.bulb { width: 19px; height: 30px; flex: none; margin-top: 3px; }
```
